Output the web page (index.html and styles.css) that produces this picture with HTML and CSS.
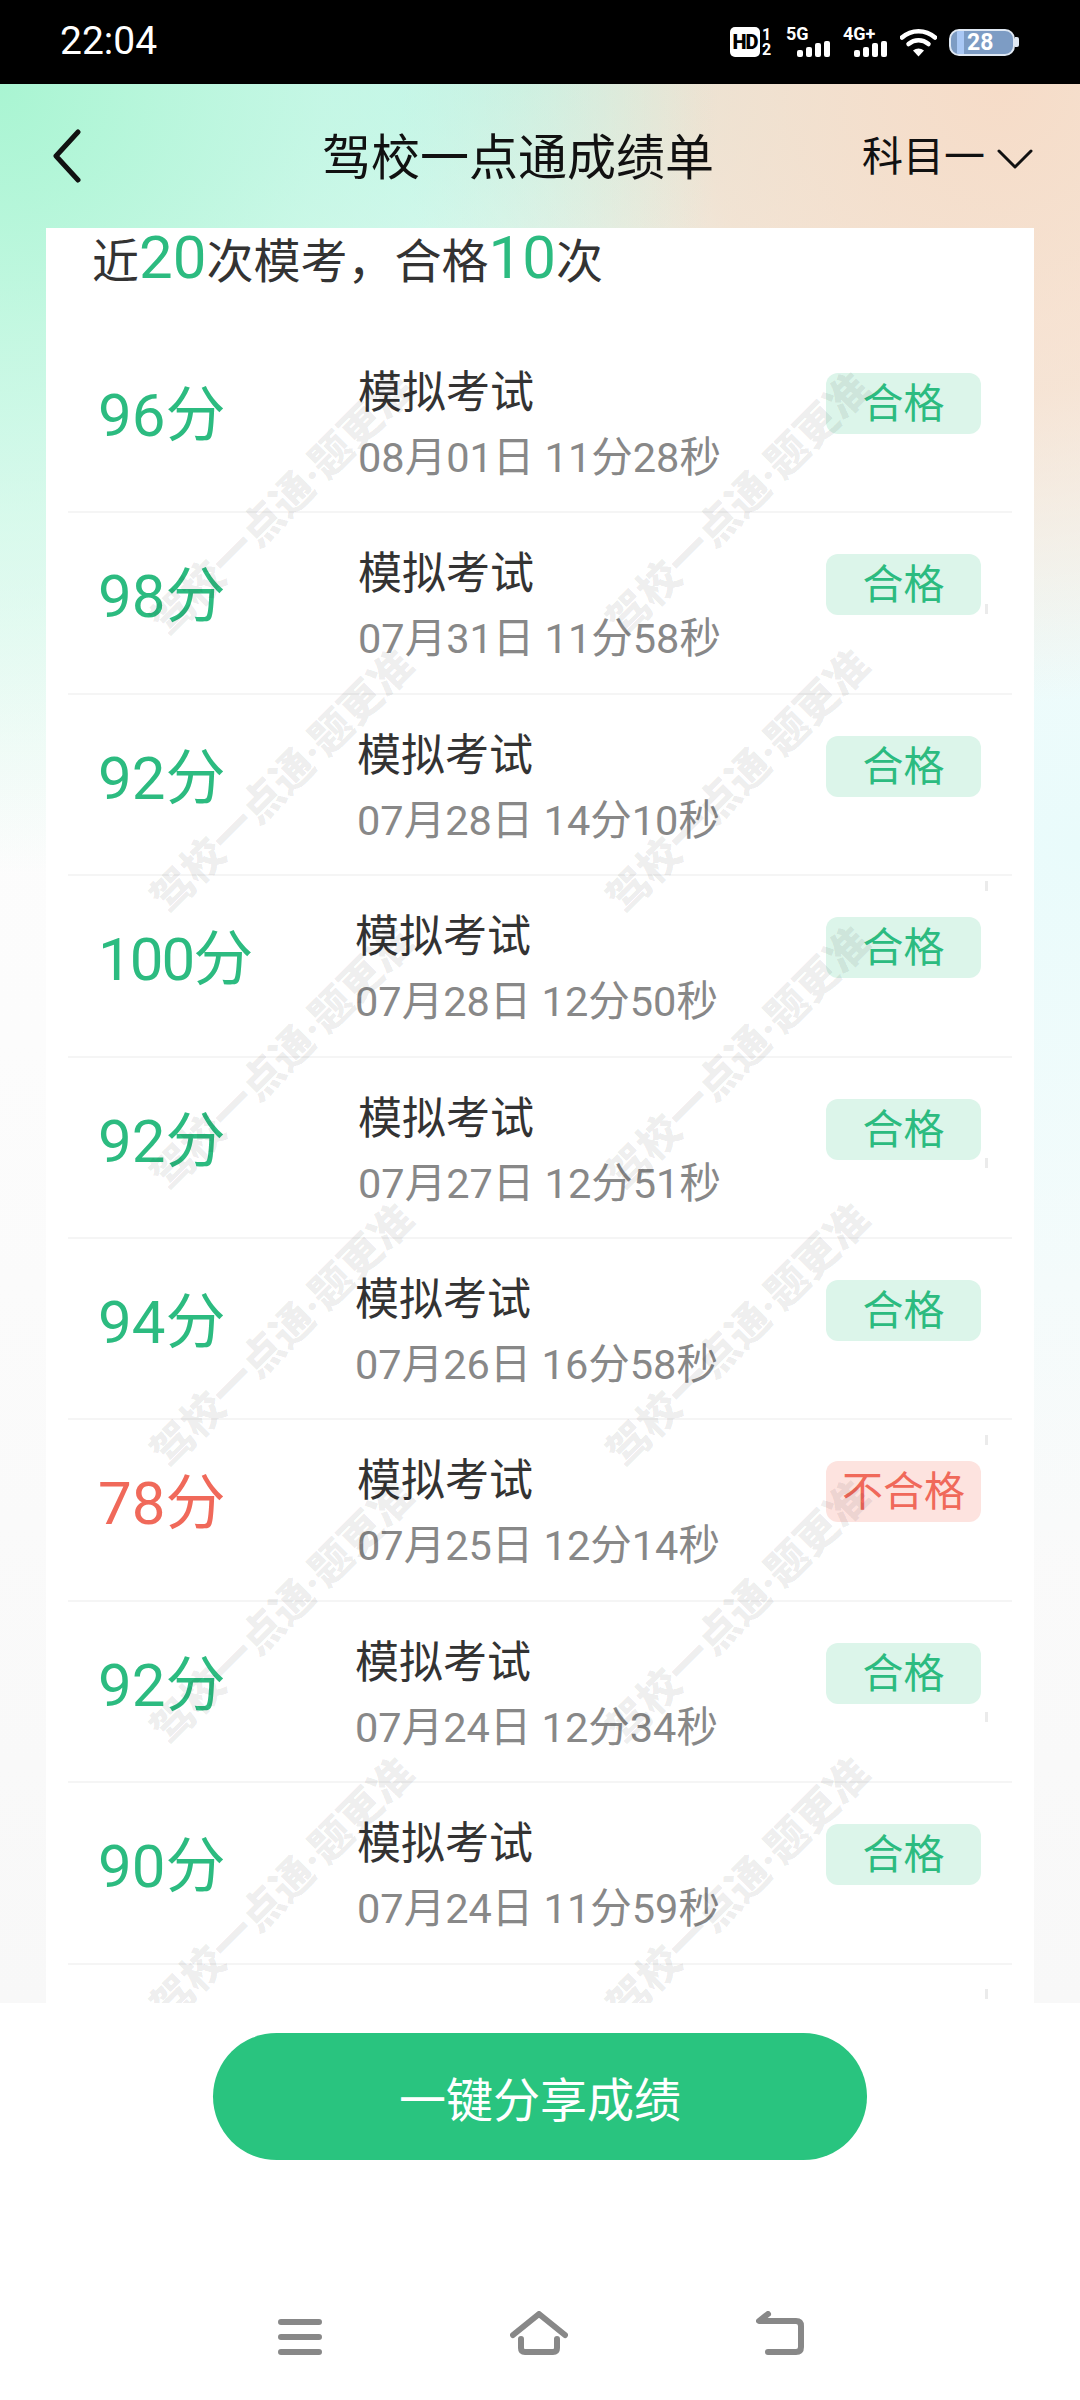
FILE: index.html
```html
<!DOCTYPE html>
<html lang="zh-CN">
<head>
    <meta charset="UTF-8">
    <meta name="viewport" content="width=device-width, initial-scale=1.0">
    <title>驾校一点通成绩单</title>
    <link rel="stylesheet" href="styles.css">
</head>
<body>
    <div class="status-bar">
        <span class="time">22:04</span>
        <div class="status-icons">
            <span class="hd">HD</span>
            <span class="sims"><span>1</span><span>2</span></span>
            <div class="signal">
                <span class="net">5G</span>
                <span class="bars"><i></i><i></i><i></i><i></i></span>
            </div>
            <div class="signal signal-4g">
                <span class="net">4G+</span>
                <span class="bars"><i></i><i></i><i></i><i></i></span>
            </div>
            <svg class="wifi" width="37" height="29" viewBox="0 0 37 29">
                <path d="M2 9.5C11.5 1 25.5 1 35 9.5" fill="none" stroke="#fff" stroke-width="4.5" stroke-linecap="round"/>
                <path d="M8.5 16C14.5 11 22.5 11 28.5 16" fill="none" stroke="#fff" stroke-width="4.5" stroke-linecap="round"/>
                <path d="M13 22.5C16.5 19.8 20.5 19.8 24 22.5L18.5 28.5Z" fill="#fff"/>
            </svg>
            <div class="battery">
                <span class="battery-level"></span>
                <span class="battery-num">28</span>
            </div>
            <span class="battery-tip"></span>
        </div>
    </div>

    <div class="page">
        <header class="topbar">
            <svg class="back" width="30" height="54" viewBox="0 0 30 54">
                <path d="M26 3L4 27L26 51" fill="none" stroke="#111" stroke-width="5" stroke-linecap="round" stroke-linejoin="round"/>
            </svg>
            <h1 class="title">驾校一点通成绩单</h1>
            <div class="subject">
                <span>科目一</span>
                <svg width="36" height="20" viewBox="0 0 36 20">
                    <path d="M2 2L18 18L34 2" fill="none" stroke="#111" stroke-width="3" stroke-linecap="round" stroke-linejoin="round"/>
                </svg>
            </div>
        </header>

        <main class="card">
            <p class="summary">近<b>20</b>次模考，合格<b>10</b>次</p>
            <div class="list">
                <div class="row">
                    <div class="score">96分</div>
                    <div class="info"><div class="name">模拟考试</div><div class="date">08月01日 11分28秒</div></div>
                    <span class="tag">合格</span>
                </div>
                <div class="row">
                    <div class="score">98分</div>
                    <div class="info"><div class="name">模拟考试</div><div class="date">07月31日 11分58秒</div></div>
                    <span class="tag">合格</span>
                </div>
                <div class="row">
                    <div class="score">92分</div>
                    <div class="info"><div class="name">模拟考试</div><div class="date">07月28日 14分10秒</div></div>
                    <span class="tag">合格</span>
                </div>
                <div class="row">
                    <div class="score">100分</div>
                    <div class="info"><div class="name">模拟考试</div><div class="date">07月28日 12分50秒</div></div>
                    <span class="tag">合格</span>
                </div>
                <div class="row">
                    <div class="score">92分</div>
                    <div class="info"><div class="name">模拟考试</div><div class="date">07月27日 12分51秒</div></div>
                    <span class="tag">合格</span>
                </div>
                <div class="row">
                    <div class="score">94分</div>
                    <div class="info"><div class="name">模拟考试</div><div class="date">07月26日 16分58秒</div></div>
                    <span class="tag">合格</span>
                </div>
                <div class="row fail">
                    <div class="score">78分</div>
                    <div class="info"><div class="name">模拟考试</div><div class="date">07月25日 12分14秒</div></div>
                    <span class="tag">不合格</span>
                </div>
                <div class="row">
                    <div class="score">92分</div>
                    <div class="info"><div class="name">模拟考试</div><div class="date">07月24日 12分34秒</div></div>
                    <span class="tag">合格</span>
                </div>
                <div class="row">
                    <div class="score">90分</div>
                    <div class="info"><div class="name">模拟考试</div><div class="date">07月24日 11分59秒</div></div>
                    <span class="tag">合格</span>
                </div>
            </div>

            <!-- watermark is printed over the list -->
            <div class="watermarks">
                <span>驾校一点通·题更准</span><span>驾校一点通·题更准</span>
                <span>驾校一点通·题更准</span><span>驾校一点通·题更准</span>
                <span>驾校一点通·题更准</span><span>驾校一点通·题更准</span>
                <span>驾校一点通·题更准</span><span>驾校一点通·题更准</span>
                <span>驾校一点通·题更准</span><span>驾校一点通·题更准</span>
                <span>驾校一点通·题更准</span><span>驾校一点通·题更准</span>
            </div>
        </main>
    </div>

    <div class="bottom">
        <button class="share">一键分享成绩</button>
        <nav class="nav">
            <svg width="44" height="36" viewBox="0 0 44 36">
                <path d="M3 3H41M3 18H41M3 33H41" fill="none" stroke="#888" stroke-width="6" stroke-linecap="round"/>
            </svg>
            <svg width="58" height="44" viewBox="0 0 58 44">
                <path d="M3 24L29 3L55 24" fill="none" stroke="#888" stroke-width="6" stroke-linecap="round" stroke-linejoin="round"/>
                <path d="M11 28V37Q11 41 15 41H43Q47 41 47 37V28" fill="none" stroke="#888" stroke-width="6" stroke-linecap="round"/>
            </svg>
            <svg width="48" height="44" viewBox="0 0 48 44">
                <path d="M12 3L3 10H40Q45 10 45 15V36Q45 41 40 41H12" fill="none" stroke="#888" stroke-width="6" stroke-linecap="round" stroke-linejoin="round"/>
            </svg>
        </nav>
    </div>
</body>
</html>
```

FILE: styles.css
```css
* {
    box-sizing: border-box;
}
body {
    margin: 0;
    width: 1080px;
    height: 2400px;
    overflow: hidden;
    background: #fff;
    font-family: Roboto, 'Noto Sans CJK SC', sans-serif;
}

/* status bar */
.status-bar {
    height: 84px;
    background: #000;
    color: #fff;
    display: flex;
    align-items: center;
    padding: 0 61px 0 60px;
    justify-content: space-between;
}
.time {
    font-size: 39px;
    margin-top: -2px;
}
.status-icons {
    display: flex;
    align-items: center;
    height: 30px;
}
.hd {
    width: 30px;
    height: 30px;
    background: #fff;
    color: #000;
    border-radius: 5px;
    font-size: 20px;
    font-weight: 900;
    line-height: 30px;
    text-align: center;
    letter-spacing: -1px;
}
.sims {
    display: flex;
    flex-direction: column;
    font-size: 16px;
    font-weight: 700;
    line-height: 15px;
    margin-left: 2px;
    width: 12px;
}
.signal {
    margin-left: 12px;
    width: 44px;
    position: relative;
    height: 30px;
}
.signal-4g {
    margin-left: 13px;
}
.net {
    position: absolute;
    left: 0;
    top: -1px;
    font-size: 18px;
    font-weight: 700;
    line-height: 16px;
}
.bars {
    position: absolute;
    right: 0;
    bottom: 0;
    display: flex;
    align-items: flex-end;
    gap: 3px;
}
.bars i {
    width: 6px;
    background: #fff;
    border-radius: 2px;
}
.bars i:nth-child(1) { height: 7px; }
.bars i:nth-child(2) { height: 10px; }
.bars i:nth-child(3) { height: 14px; }
.bars i:nth-child(4) { height: 16px; }
.wifi {
    margin-left: 13px;
}
.battery {
    width: 66px;
    height: 27px;
    margin-left: 12px;
    border: 2px solid #dfe8f3;
    border-radius: 10px;
    background: #7d9cc4;
    position: relative;
    overflow: hidden;
    font-size: 23px;
    font-weight: 700;
    line-height: 23px;
}
.battery-level {
    position: absolute;
    left: 6px;
    top: 0;
    bottom: 0;
    width: 7px;
    background: #a9c8f5;
}
.battery-num {
    position: absolute;
    left: 16px;
    color: #fff;
}
.battery-tip {
    width: 4px;
    height: 10px;
    background: #dfe8f3;
    border-radius: 0 2px 2px 0;
}

/* gradient page behind the card */
.page {
    height: 1919px;
    padding: 0 46px;
    background:
        radial-gradient(ellipse 720px 790px at 0 0, #a9f5d2 0%, rgba(190, 247, 224, .72) 45%, rgba(190, 247, 224, 0) 100%),
        radial-gradient(ellipse 600px 620px at 1000px 0, #f6dcc8 0%, rgba(246, 220, 200, .75) 50%, rgba(246, 220, 200, 0) 100%),
        radial-gradient(ellipse 800px 300px at 520px 0, #c8f4ee 0%, rgba(200, 244, 238, 0) 100%),
        radial-gradient(ellipse 800px 720px at 1080px 760px, #e9fbfb 0%, rgba(233, 251, 251, 0) 100%),
        linear-gradient(180deg, #fdfdfd 0%, #fcfcfc 50%, #f8f8f8 100%);
}
.topbar {
    height: 144px;
    margin: 0 -46px;
    padding: 45px 47px 0 52px;
    display: flex;
}
.title {
    margin: -6px 0 0 240px;
    font-size: 49px;
    line-height: 72px;
    font-weight: 400;
    color: #111;
}
.subject {
    display: flex;
    align-items: flex-start;
    margin-left: auto;
    font-size: 41px;
    line-height: 60px;
    color: #111;
    margin-top: -2px;
}
.subject svg {
    margin: 22px 0 0 12px;
}

/* card */
.card {
    height: 1775px;
    background: #fff;
    position: relative;
}
.summary {
    margin: 0;
    height: 104px;
    padding: 2px 0 0 46px;
    font-size: 47px;
    line-height: 56px;
    color: #333;
}
.summary b {
    font-weight: 400;
    font-size: 60px;
    color: #2cbb80;
}
.list {
    margin: 0 22px;
    height: 1671px;
    overflow: hidden;
}
.row {
    height: 181.4px;
    border-bottom: 2px solid #f5f5f5;
    display: flex;
    align-items: flex-start;
    padding-right: 31px;
}
.score {
    width: 290px;
    padding: 44px 0 0 30px;
    font-size: 60px;
    line-height: 80px;
    color: #2cbb80;
}
.info {
    flex: 1;
    padding-top: 31px;
}
.name {
    font-size: 44px;
    line-height: 60px;
    color: #333;
}
.date {
    margin-top: 6px;
    font-size: 41.5px;
    line-height: 58px;
    color: #888;
}
.tag {
    width: 155px;
    height: 61px;
    margin-top: 41px;
    background: #dcf5ea;
    color: #2cbb80;
    border-radius: 12px;
    font-size: 41px;
    line-height: 63px;
    text-align: center;
}
.fail .score {
    color: #f0695a;
}
.fail .tag {
    background: #fde3df;
    color: #f0695a;
}

/* small horizontal drift between rows, same as the capture */
.row:nth-child(3) .info,
.row:nth-child(7) .info { margin-left: -1px; }
.row:nth-child(4) .info { margin-left: -3px; }
.row:nth-child(6) .info,
.row:nth-child(8) .info { margin-left: -3px; }
.row:nth-child(9) .info { margin-left: -1px; }
.row:nth-child(4) .score { letter-spacing: -2px; }

.watermarks {
    position: absolute;
    left: 0;
    top: 0;
    width: 942px;
    height: 100%;
    overflow: hidden;
    pointer-events: none;
    padding: 138px 0 0 9px;
    display: grid;
    grid-template-columns: 456px 456px;
    grid-auto-rows: 277px;
    background: repeating-linear-gradient(180deg, rgba(0, 0, 0, .08) 0 10px, transparent 10px 277px) 939px 376px / 3px 100% no-repeat;
}
.watermarks span {
    align-self: center;
    justify-self: center;
    white-space: nowrap;
    transform: rotate(-45deg);
    font-size: 42px;
    line-height: 48px;
    font-weight: 900;
    color: rgba(0, 0, 0, .08);
}

/* bottom bar */
.bottom {
    height: 397px;
    background: #fff;
    display: flex;
    flex-direction: column;
    align-items: center;
}
.share {
    width: 654px;
    height: 127px;
    margin-top: 30px;
    border: none;
    border-radius: 64px;
    background: #29c47f;
    color: #fff;
    font-family: inherit;
    font-size: 47px;
}
.nav {
    width: 100%;
    margin-top: 151px;
    padding: 0 276px 0 278px;
    display: flex;
    justify-content: space-between;
    align-items: flex-end;
}
```
